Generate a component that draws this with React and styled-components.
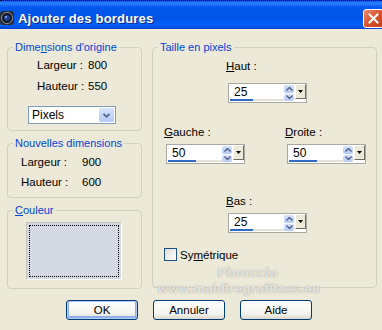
import styled, { createGlobalStyle } from "styled-components";

const GlobalStyle = createGlobalStyle`
  html, body {
    margin: 0;
    padding: 0;
    background: #ECE9D8;
  }
`;

const Window = styled.div`
  position: relative;
  width: 382px;
  height: 330px;
  overflow: hidden;
  background: #ECE9D8;
  font-family: "Liberation Sans", Tahoma, sans-serif;
  font-size: 11px;
  color: #000;
`;

const TitleBar = styled.div`
  height: 29px;
  box-sizing: border-box;
  border-top: 1px dotted #000;
  padding-top: 6px;
  display: flex;
  align-items: center;
  background: linear-gradient(
    to bottom,
    #0A5FE8 0%,
    #2F82FF 8%,
    #0058EE 22%,
    #0054E8 60%,
    #0060F8 85%,
    #0046D8 100%
  );
`;

const TitleText = styled.span`
  margin-left: 4px;
  font-weight: bold;
  font-size: 13px;
  letter-spacing: 0.2px;
  color: #fff;
  text-shadow: 1px 1px 0 #0B2A8C;
`;

const CloseButton = styled.div`
  margin-left: auto;
  margin-right: -2px;
  width: 21px;
  height: 19px;
  box-sizing: border-box;
  border: 1px solid #fff;
  border-radius: 3px;
  background: linear-gradient(to bottom right, #EB8A6C, #D6502A 55%, #C2401B);
  display: flex;
  align-items: center;
  justify-content: center;
`;

const Body = styled.div`
  display: grid;
  grid-template-columns: 135px 225px;
  column-gap: 10px;
  padding: 12px 0 0 7px;
`;

const Column = styled.div`
  display: flex;
  flex-direction: column;
  gap: ${p => p.$gap || 0}px;
`;

const Group = styled.fieldset`
  margin: 0;
  padding: 0;
  min-width: 0;
  height: ${p => p.$h}px;
  box-sizing: border-box;
  border: 1px solid #D0D0BF;
  border-radius: 4px;
`;

const Legend = styled.legend`
  margin-left: 5px;
  padding: 0 2px;
  font-size: 11px;
  line-height: 13px;
  white-space: nowrap;
  color: #0046D5;
`;

const GroupBody = styled.div`
  display: flex;
  flex-direction: column;
  align-items: flex-start;
  padding-left: ${p => p.$pad || 0}px;
`;

const Key = styled.span`
  text-decoration: underline;
`;

const InfoRow = styled.div`
  display: grid;
  grid-template-columns: ${p => p.$label}px auto;
  line-height: 13px;
  font-size: 11.5px;
  margin-top: ${p => p.$top}px;
`;

const Select = styled.div`
  margin-top: ${p => p.$top}px;
  width: 88px;
  height: 18px;
  box-sizing: border-box;
  border: 1px solid #7F9DB9;
  background: #fff;
  display: flex;
  align-items: center;
  padding: 1px;
`;

const SelectText = styled.span`
  flex: 1;
  padding-left: 2px;
  font-size: 12px;
`;

const SelectButton = styled.div`
  width: 15px;
  height: 14px;
  border-radius: 2px;
  background: linear-gradient(to bottom, #D8E3FC, #B5C9F7);
  display: flex;
  align-items: center;
  justify-content: center;
`;

const Swatch = styled.div`
  margin-top: 5px;
  width: 96px;
  height: 58px;
  box-sizing: border-box;
  border: 1px solid;
  border-color: #C4C2B8 #FFFFFF #FFFFFF #C4C2B8;
  padding: 2px;
  background: #D5D9E3;
`;

const FocusRing = styled.div`
  height: 100%;
  box-sizing: border-box;
  border: 1px dotted #000;
`;

const Field = styled.div`
  display: flex;
  flex-direction: column;
  align-items: flex-start;
  margin-top: ${p => p.$top}px;
  margin-left: ${p => p.$left || 0}px;
  gap: ${p => p.$gap}px;
`;

const FieldLabel = styled.span`
  line-height: 13px;
  font-size: 11.5px;
`;

const FieldPair = styled.div`
  display: flex;
  gap: 40px;
  margin-left: ${p => p.$left}px;
  margin-top: ${p => p.$top}px;
`;

const Spin = styled.div`
  margin-left: 2px;
  width: 79px;
  height: 20px;
  box-sizing: border-box;
  border: 1px solid #A9A8A2;
  background: #fff;
  display: flex;
`;

const SpinValue = styled.div`
  flex: 1;
  display: flex;
  flex-direction: column;
  justify-content: space-between;
  padding: 1px 0 1px 1px;
`;

const SpinText = styled.span`
  padding-left: 4px;
  font-size: 12px;
  line-height: 14px;
`;

const Track = styled.div`
  height: 2px;
  background: #E4E1D6;
`;

const TrackFill = styled.div`
  height: 100%;
  width: ${p => p.$w}px;
  background: #316AC5;
`;

const Arrows = styled.div`
  width: 10px;
  padding: 1px 0;
  display: flex;
  flex-direction: column;
  gap: 1px;
`;

const ArrowButton = styled.div`
  flex: 1;
  border-radius: 2px;
  background: linear-gradient(to bottom, #D6E1FB, #B6C9F5);
  display: flex;
  align-items: center;
  justify-content: center;
`;

const MenuButton = styled.div`
  width: 11px;
  height: 15px;
  margin: 0 0 0 1px;
  box-sizing: border-box;
  border: 1px solid;
  border-color: #FFFFFF #716F64 #716F64 #FFFFFF;
  background: #ECE9D8;
  display: flex;
  align-items: center;
  justify-content: center;
`;

const CheckRow = styled.label`
  display: flex;
  align-items: center;
  gap: 3px;
  margin-top: ${p => p.$top}px;
  margin-left: ${p => p.$left}px;
  font-size: 11.5px;
`;

const CheckBox = styled.span`
  width: 13px;
  height: 13px;
  box-sizing: border-box;
  border: 1px solid #1C5180;
  background: linear-gradient(to bottom right, #DCDBD5, #FFFFFF);
`;

const Buttons = styled.div`
  display: flex;
  justify-content: center;
  gap: 15px;
  margin-top: 11px;
  padding-right: 4px;
`;

const Button = styled.div`
  width: 72px;
  height: 20px;
  box-sizing: border-box;
  border: 1px solid #003C74;
  border-radius: 3px;
  background: linear-gradient(to bottom, #FFFFFF, #F3F3EF 70%, #DCD8CC);
  box-shadow: ${p => (p.$default ? "inset 0 0 0 1px #B4CBF4, inset 0 -1px 0 2px #8FB0EA" : "none")};
  display: flex;
  align-items: center;
  justify-content: center;
  font-size: 11.5px;
`;

const Watermark = styled.div`
  position: absolute;
  left: ${p => p.$x}px;
  top: ${p => p.$y}px;
  font-family: "DejaVu Sans", sans-serif;
  font-weight: bold;
  font-size: ${p => p.$size}px;
  letter-spacing: ${p => p.$spacing || 0}px;
  color: rgba(255, 255, 255, 0.75);
  text-shadow: 0 0 1px rgba(120, 120, 110, 0.9);
  pointer-events: none;
`;

const AppIcon = () => (
  <svg width="14" height="16" viewBox="0 0 14 16">
    <rect x="0" y="1" width="14" height="14" rx="3" fill="#2A2F3A" />
    <circle cx="7" cy="8" r="5.5" fill="#10131A" stroke="#8A93A8" strokeWidth="1" />
    <circle cx="7" cy="8" r="3" fill="#1D3F9A" />
    <circle cx="6" cy="7" r="1" fill="#9DB8FF" />
  </svg>
);

const CloseIcon = () => (
  <svg width="11" height="11" viewBox="0 0 11 11">
    <path d="M1.5 1.5 L9.5 9.5 M9.5 1.5 L1.5 9.5" stroke="#fff" strokeWidth="2" strokeLinecap="square" />
  </svg>
);

const Chevron = () => (
  <svg width="7" height="5" viewBox="0 0 7 5">
    <path d="M0.5 0.8 L3.5 3.8 L6.5 0.8" stroke="#4D6185" strokeWidth="1.6" fill="none" />
  </svg>
);

const SmallArrow = ({ up }) => (
  <svg width="7" height="4" viewBox="0 0 7 4">
    <path
      d={up ? "M0.5 3.5 L3.5 0.5 L6.5 3.5" : "M0.5 0.5 L3.5 3.5 L6.5 0.5"}
      stroke="#4D6185"
      strokeWidth="1.4"
      fill="none"
    />
  </svg>
);

const DownTriangle = () => (
  <svg width="5" height="3" viewBox="0 0 5 3">
    <path d="M0 0 H5 L2.5 3 Z" fill="#000" />
  </svg>
);

const SpinBox = ({ value, fill }) => (
  <Spin>
    <SpinValue>
      <SpinText>{value}</SpinText>
      <Track>
        <TrackFill $w={fill} />
      </Track>
    </SpinValue>
    <Arrows>
      <ArrowButton>
        <SmallArrow up />
      </ArrowButton>
      <ArrowButton>
        <SmallArrow />
      </ArrowButton>
    </Arrows>
    <MenuButton>
      <DownTriangle />
    </MenuButton>
  </Spin>
);

const App = () => (
  <>
    <GlobalStyle />
    <Window>
      <TitleBar>
        <AppIcon />
        <TitleText>Ajouter des bordures</TitleText>
        <CloseButton>
          <CloseIcon />
        </CloseButton>
      </TitleBar>

      <Body>
        <Column $gap={6}>
          <Group $h={90}>
            <Legend>
              Dime<Key>n</Key>sions d'origine
            </Legend>
            <GroupBody $pad={29}>
              <InfoRow $label={51} $top={5}>
                <span>Largeur :</span>
                <span>800</span>
              </InfoRow>
              <InfoRow $label={51} $top={8}>
                <span>Hauteur :</span>
                <span>550</span>
              </InfoRow>
            </GroupBody>
            <GroupBody $pad={20}>
              <Select $top={13}>
                <SelectText>Pixels</SelectText>
                <SelectButton>
                  <Chevron />
                </SelectButton>
              </Select>
            </GroupBody>
          </Group>

          <Group $h={61}>
            <Legend>Nouvelles dimensions</Legend>
            <GroupBody $pad={13}>
              <InfoRow $label={61} $top={6}>
                <span>Largeur :</span>
                <span>900</span>
              </InfoRow>
              <InfoRow $label={61} $top={7}>
                <span>Hauteur :</span>
                <span>600</span>
              </InfoRow>
            </GroupBody>
          </Group>

          <Group $h={85}>
            <Legend>
              <Key>C</Key>ouleur
            </Legend>
            <GroupBody $pad={18}>
              <Swatch>
                <FocusRing />
              </Swatch>
            </GroupBody>
          </Group>
        </Column>

        <Column>
          <Group $h={247}>
            <Legend>Taille en pixels</Legend>
            <GroupBody>
              <Field $top={6} $left={73} $gap={10}>
                <FieldLabel>
                  <Key>H</Key>aut :
                </FieldLabel>
                <SpinBox value="25" fill={23} />
              </Field>
              <FieldPair $left={11} $top={23}>
                <Field $top={0} $gap={5}>
                  <FieldLabel>
                    <Key>G</Key>auche :
                  </FieldLabel>
                  <SpinBox value="50" fill={28} />
                </Field>
                <Field $top={0} $gap={5}>
                  <FieldLabel>
                    <Key>D</Key>roite :
                  </FieldLabel>
                  <SpinBox value="50" fill={28} />
                </Field>
              </FieldPair>
              <Field $top={31} $left={73} $gap={5}>
                <FieldLabel>
                  <Key>B</Key>as :
                </FieldLabel>
                <SpinBox value="25" fill={23} />
              </Field>
              <CheckRow $top={15} $left={11}>
                <CheckBox />
                <span>
                  Sy<Key>m</Key>étrique
                </span>
              </CheckRow>
            </GroupBody>
          </Group>
        </Column>
      </Body>

      <Buttons>
        <Button $default>OK</Button>
        <Button>Annuler</Button>
        <Button>Aide</Button>
      </Buttons>

      <Watermark $x={217} $y={265} $size={13}>
        Pinuccia
      </Watermark>
      <Watermark $x={157} $y={282} $size={12} $spacing={-0.3}>
        www.maldiregrafitess.eu
      </Watermark>
    </Window>
  </>
);

export default App;
